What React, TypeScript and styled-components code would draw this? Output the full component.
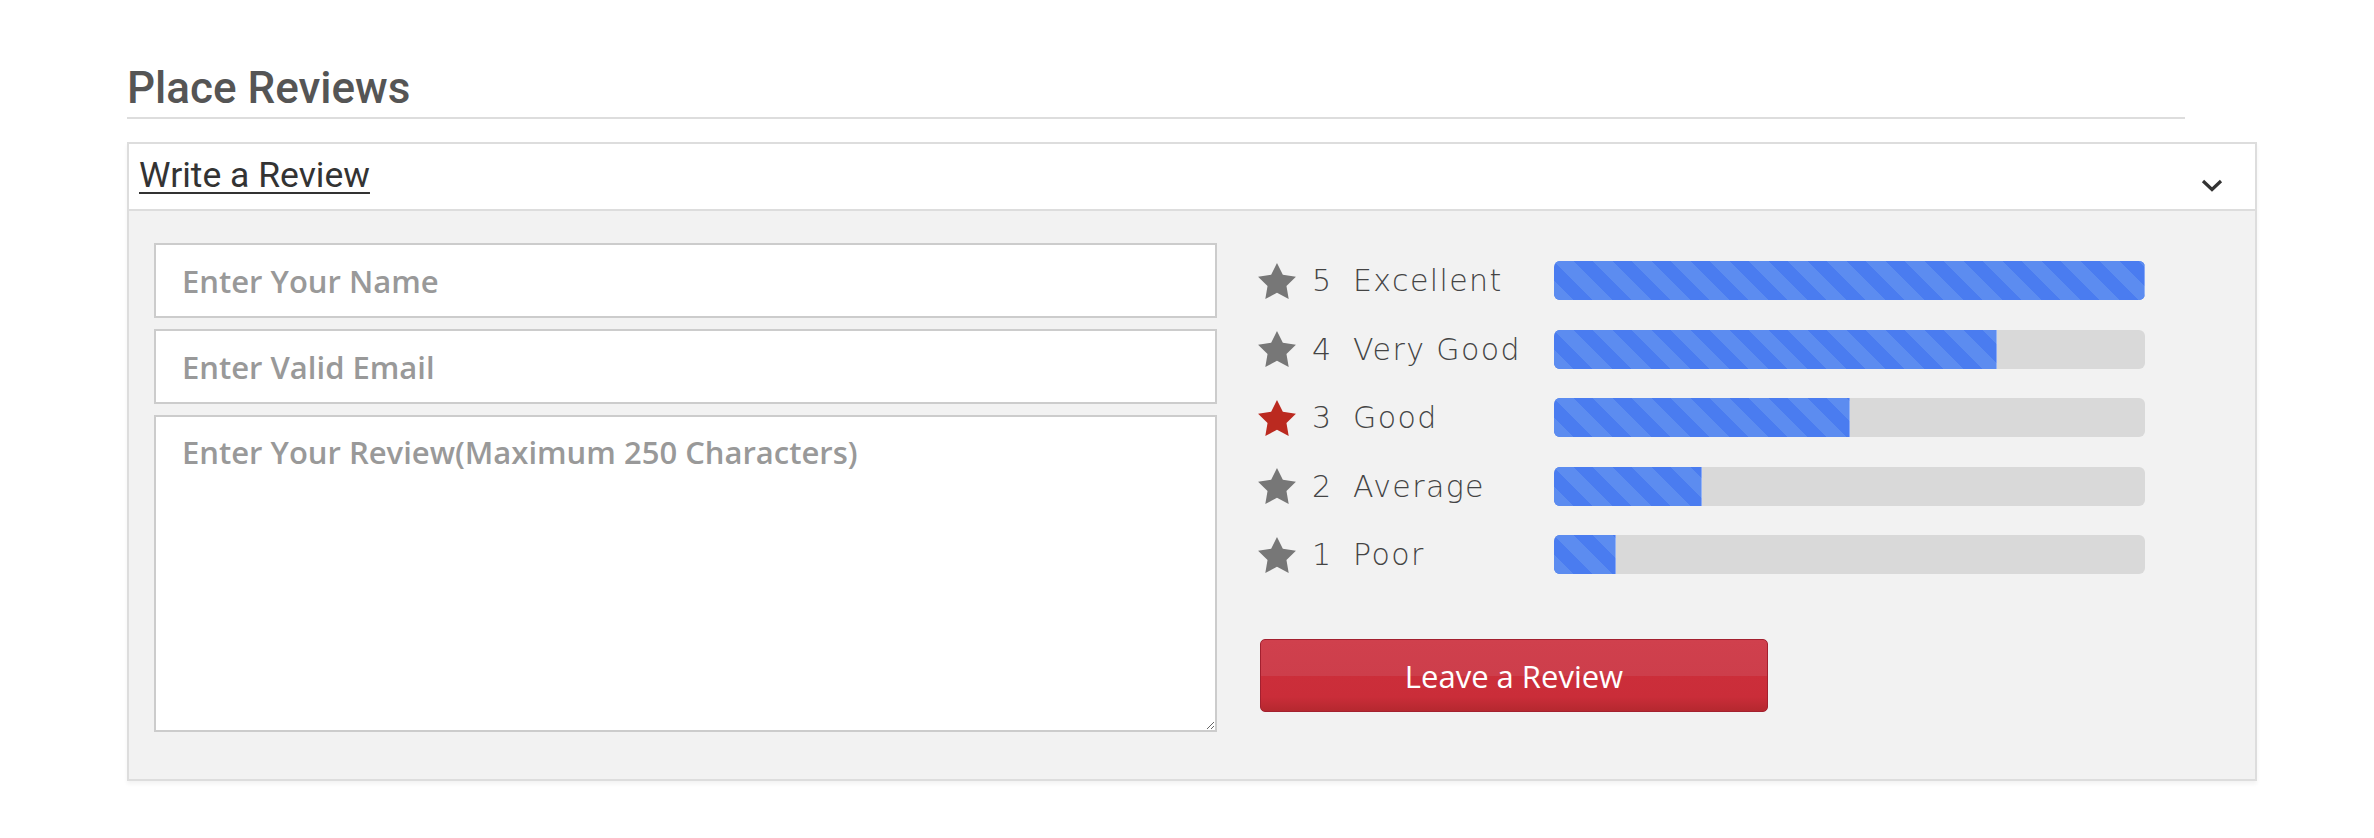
import React from "react";
import styled, { createGlobalStyle } from "styled-components";

const GlobalStyle = createGlobalStyle`
  html, body {
    margin: 0;
    padding: 0;
    background: #ffffff;
  }
`;

const Page = styled.div`
  padding: 64px 0 40px 127px;
  font-family: Roboto, "Liberation Sans", sans-serif;
`;

const Title = styled.h2`
  width: 2058px;
  margin: 0;
  padding-bottom: 5px;
  border-bottom: 2px solid #dddddd;
  font-family: Roboto, "Liberation Sans", sans-serif;
  font-weight: 500;
  font-size: 44px;
  line-height: 48px;
  color: #555555;
`;

const Accordion = styled.section`
  width: 2126px;
  margin-top: 23px;
  border: 2px solid #dddddd;
  box-shadow: 0 3px 4px rgba(0, 0, 0, 0.05);
`;

const AccordionHeader = styled.div`
  height: 65px;
  display: flex;
  align-items: center;
  justify-content: space-between;
  padding: 0 32px 0 10px;
  background: #ffffff;
  border-bottom: 2px solid #dddddd;
`;

const HeaderLink = styled.a`
  margin-top: -4px;
  font-family: Roboto, "Liberation Sans", sans-serif;
  font-size: 35.5px;
  color: #333333;
  text-decoration: underline;
  text-decoration-thickness: 2px;
  text-underline-offset: 5px;
  cursor: pointer;
`;

const ChevronIcon = styled.svg`
  margin-top: 18px;
  flex-shrink: 0;
`;

const AccordionBody = styled.div`
  display: flex;
  align-items: flex-start;
  padding: 32px 25px 47px 25px;
  background: #f2f2f2;
`;

const FormColumn = styled.div`
  width: 1063px;
  display: flex;
  flex-direction: column;
  gap: 11px;
`;

const fieldStyles = `
  box-sizing: border-box;
  width: 100%;
  margin: 0;
  padding: 0 26px;
  border: 2px solid #cccccc;
  background: #ffffff;
  font-family: "Open Sans", "Noto Sans", sans-serif;
  font-weight: 600;
  font-size: 31px;
  color: #555555;
  outline: none;
  &::placeholder {
    color: #999999;
    opacity: 1;
  }
`;

const TextInput = styled.input`
  ${fieldStyles}
  height: 75px;
`;

const TextArea = styled.textarea`
  ${fieldStyles}
  display: block;
  height: 317px;
  padding-top: 14px;
  resize: both;
`;

const RatingsColumn = styled.div`
  display: flex;
  flex-direction: column;
  margin-left: 41px;
  padding-top: 18px;
`;

const RatingList = styled.div`
  display: flex;
  flex-direction: column;
  gap: 29.5px;
`;

const RatingRow = styled.div`
  display: flex;
  align-items: center;
  height: 39px;
`;

const StarIcon = styled.svg<{ $active?: boolean }>`
  width: 38px;
  height: 36px;
  flex-shrink: 0;
  fill: ${(p) => (p.$active ? "#bb2a20" : "#777777")};
`;

const RatingNumber = styled.span`
  width: 41px;
  margin-left: 16px;
  font-family: "DejaVu Sans", sans-serif;
  font-weight: 200;
  font-size: 30px;
  color: #444444;
`;

const RatingLabel = styled.span`
  width: 201px;
  font-family: "DejaVu Sans", sans-serif;
  font-weight: 200;
  font-size: 30px;
  letter-spacing: 1.4px;
  color: #444444;
  white-space: nowrap;
`;

const BarTrack = styled.div`
  width: 591px;
  height: 39px;
  border-radius: 6px;
  background: #d9d9d9;
  overflow: hidden;
`;

const BarFill = styled.div`
  height: 100%;
  background-color: #4a7cf0;
  background-image: linear-gradient(
    45deg,
    #5c8cf0 25%,
    transparent 25%,
    transparent 50%,
    #5c8cf0 50%,
    #5c8cf0 75%,
    transparent 75%,
    transparent
  );
  background-size: 39px 39px;
  box-shadow: inset -1px 0 0 rgba(255, 255, 255, 0.35);
`;

const SubmitButton = styled.button`
  width: 508px;
  height: 73px;
  margin: 65px 0 0 2px;
  border: 1px solid #a3202f;
  border-radius: 5px;
  background: linear-gradient(
    to bottom,
    #d0404d 0%,
    #cd3e4b 50%,
    #cc2e3a 50%,
    #ca2d39 80%,
    #b5282f 100%
  );
  color: #ffffff;
  font-family: "Open Sans", "Noto Sans", sans-serif;
  font-size: 31px;
  cursor: pointer;
`;

const ratings = [
  { value: 5, label: "Excellent", percent: 100 },
  { value: 4, label: "Very Good", percent: 75 },
  { value: 3, label: "Good", percent: 50, active: true },
  { value: 2, label: "Average", percent: 25 },
  { value: 1, label: "Poor", percent: 10.5 },
];

const Star = ({ active }: { active?: boolean }) => (
  <StarIcon $active={active} viewBox="2 2 20 19.02">
    <path d="M12 2l3.09 6.26L22 9.27l-5 4.87 1.18 6.88L12 17.77l-6.18 3.25L7 14.14 2 9.27l6.91-1.01L12 2z" />
  </StarIcon>
);

const Chevron = () => (
  <ChevronIcon width="22" height="13" viewBox="0 0 22 13">
    <polyline
      points="2,2 11,10.5 20,2"
      fill="none"
      stroke="#333333"
      strokeWidth="3.2"
    />
  </ChevronIcon>
);

export default function App() {
  return (
    <>
      <GlobalStyle />
      <Page>
        <Title>Place Reviews</Title>
        <Accordion>
          <AccordionHeader>
            <HeaderLink>Write a Review</HeaderLink>
            <Chevron />
          </AccordionHeader>
          <AccordionBody>
            <FormColumn>
              <TextInput placeholder="Enter Your Name" />
              <TextInput placeholder="Enter Valid Email" />
              <TextArea placeholder="Enter Your Review(Maximum 250 Characters)" />
            </FormColumn>
            <RatingsColumn>
              <RatingList>
                {ratings.map((r) => (
                  <RatingRow key={r.value}>
                    <Star active={r.active} />
                    <RatingNumber>{r.value}</RatingNumber>
                    <RatingLabel>{r.label}</RatingLabel>
                    <BarTrack>
                      <BarFill style={{ width: `${r.percent}%` }} />
                    </BarTrack>
                  </RatingRow>
                ))}
              </RatingList>
              <SubmitButton>Leave a Review</SubmitButton>
            </RatingsColumn>
          </AccordionBody>
        </Accordion>
      </Page>
    </>
  );
}
